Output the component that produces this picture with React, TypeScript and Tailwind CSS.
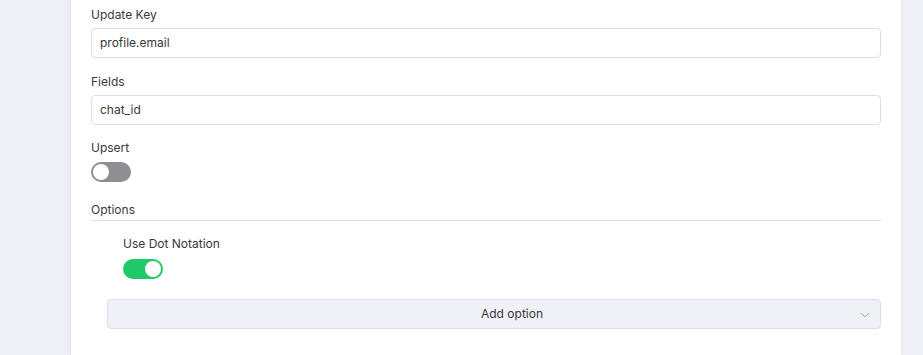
export default function App() {
  return (
    <div
      className="flex h-[355px] w-full overflow-hidden bg-[#eef0f6] text-[12px] text-[#38383e]"
      style={{ fontFamily: "Inter, 'Noto Sans', sans-serif" }}
    >
      <div className="w-[70px] shrink-0" />
      <div className="flex w-[831px] shrink-0 flex-col border-l border-[#e2e4ee] bg-white px-5 pt-[7px] shadow-[0_0_6px_rgba(0,0,0,0.06)]">
        <label className="mb-[5px] leading-[16px]">Update Key</label>
        <div className="flex h-[30px] items-center rounded-[4px] border border-[#dcdde6] px-[8px]">
          profile.email
        </div>

        <label className="mb-[5px] mt-[16px] leading-[16px]">Fields</label>
        <div className="flex h-[30px] items-center rounded-[4px] border border-[#dcdde6] px-[8px]">
          chat_id
        </div>

        <label className="mb-[6px] mt-[15px] leading-[16px]">Upsert</label>
        <div className="flex h-[20px] w-[40px] items-center rounded-full bg-[#8e8e93] px-[2px]">
          <div className="size-[16px] rounded-full bg-white" />
        </div>

        <div className="mt-[20px] border-b border-[#dcdde8] pb-[2px] leading-[16px]">Options</div>

        <div className="flex flex-col pl-[32px] pt-[15px]">
          <label className="mb-[7px] leading-[16px]">Use Dot Notation</label>
          <div className="flex h-[20px] w-[40px] items-center justify-end rounded-full bg-[#1fc969] px-[2px]">
            <div className="size-[16px] rounded-full bg-white" />
          </div>
        </div>

        <div className="relative ml-[16px] mt-[20px] flex h-[30px] items-center justify-center rounded-[4px] border border-[#dcdde8] bg-[#f0f1f6] pl-[36px]">
          <span>Add option</span>
          <svg
            className="absolute right-[8px] top-[8px]"
            width="14"
            height="14"
            viewBox="0 0 24 24"
            fill="none"
            stroke="#a0a1aa"
            strokeWidth="1.6"
            strokeLinecap="round"
            strokeLinejoin="round"
          >
            <path d="M5 9l7 6 7-6" />
          </svg>
        </div>
      </div>
      <div className="flex-1" />
    </div>
  );
}
